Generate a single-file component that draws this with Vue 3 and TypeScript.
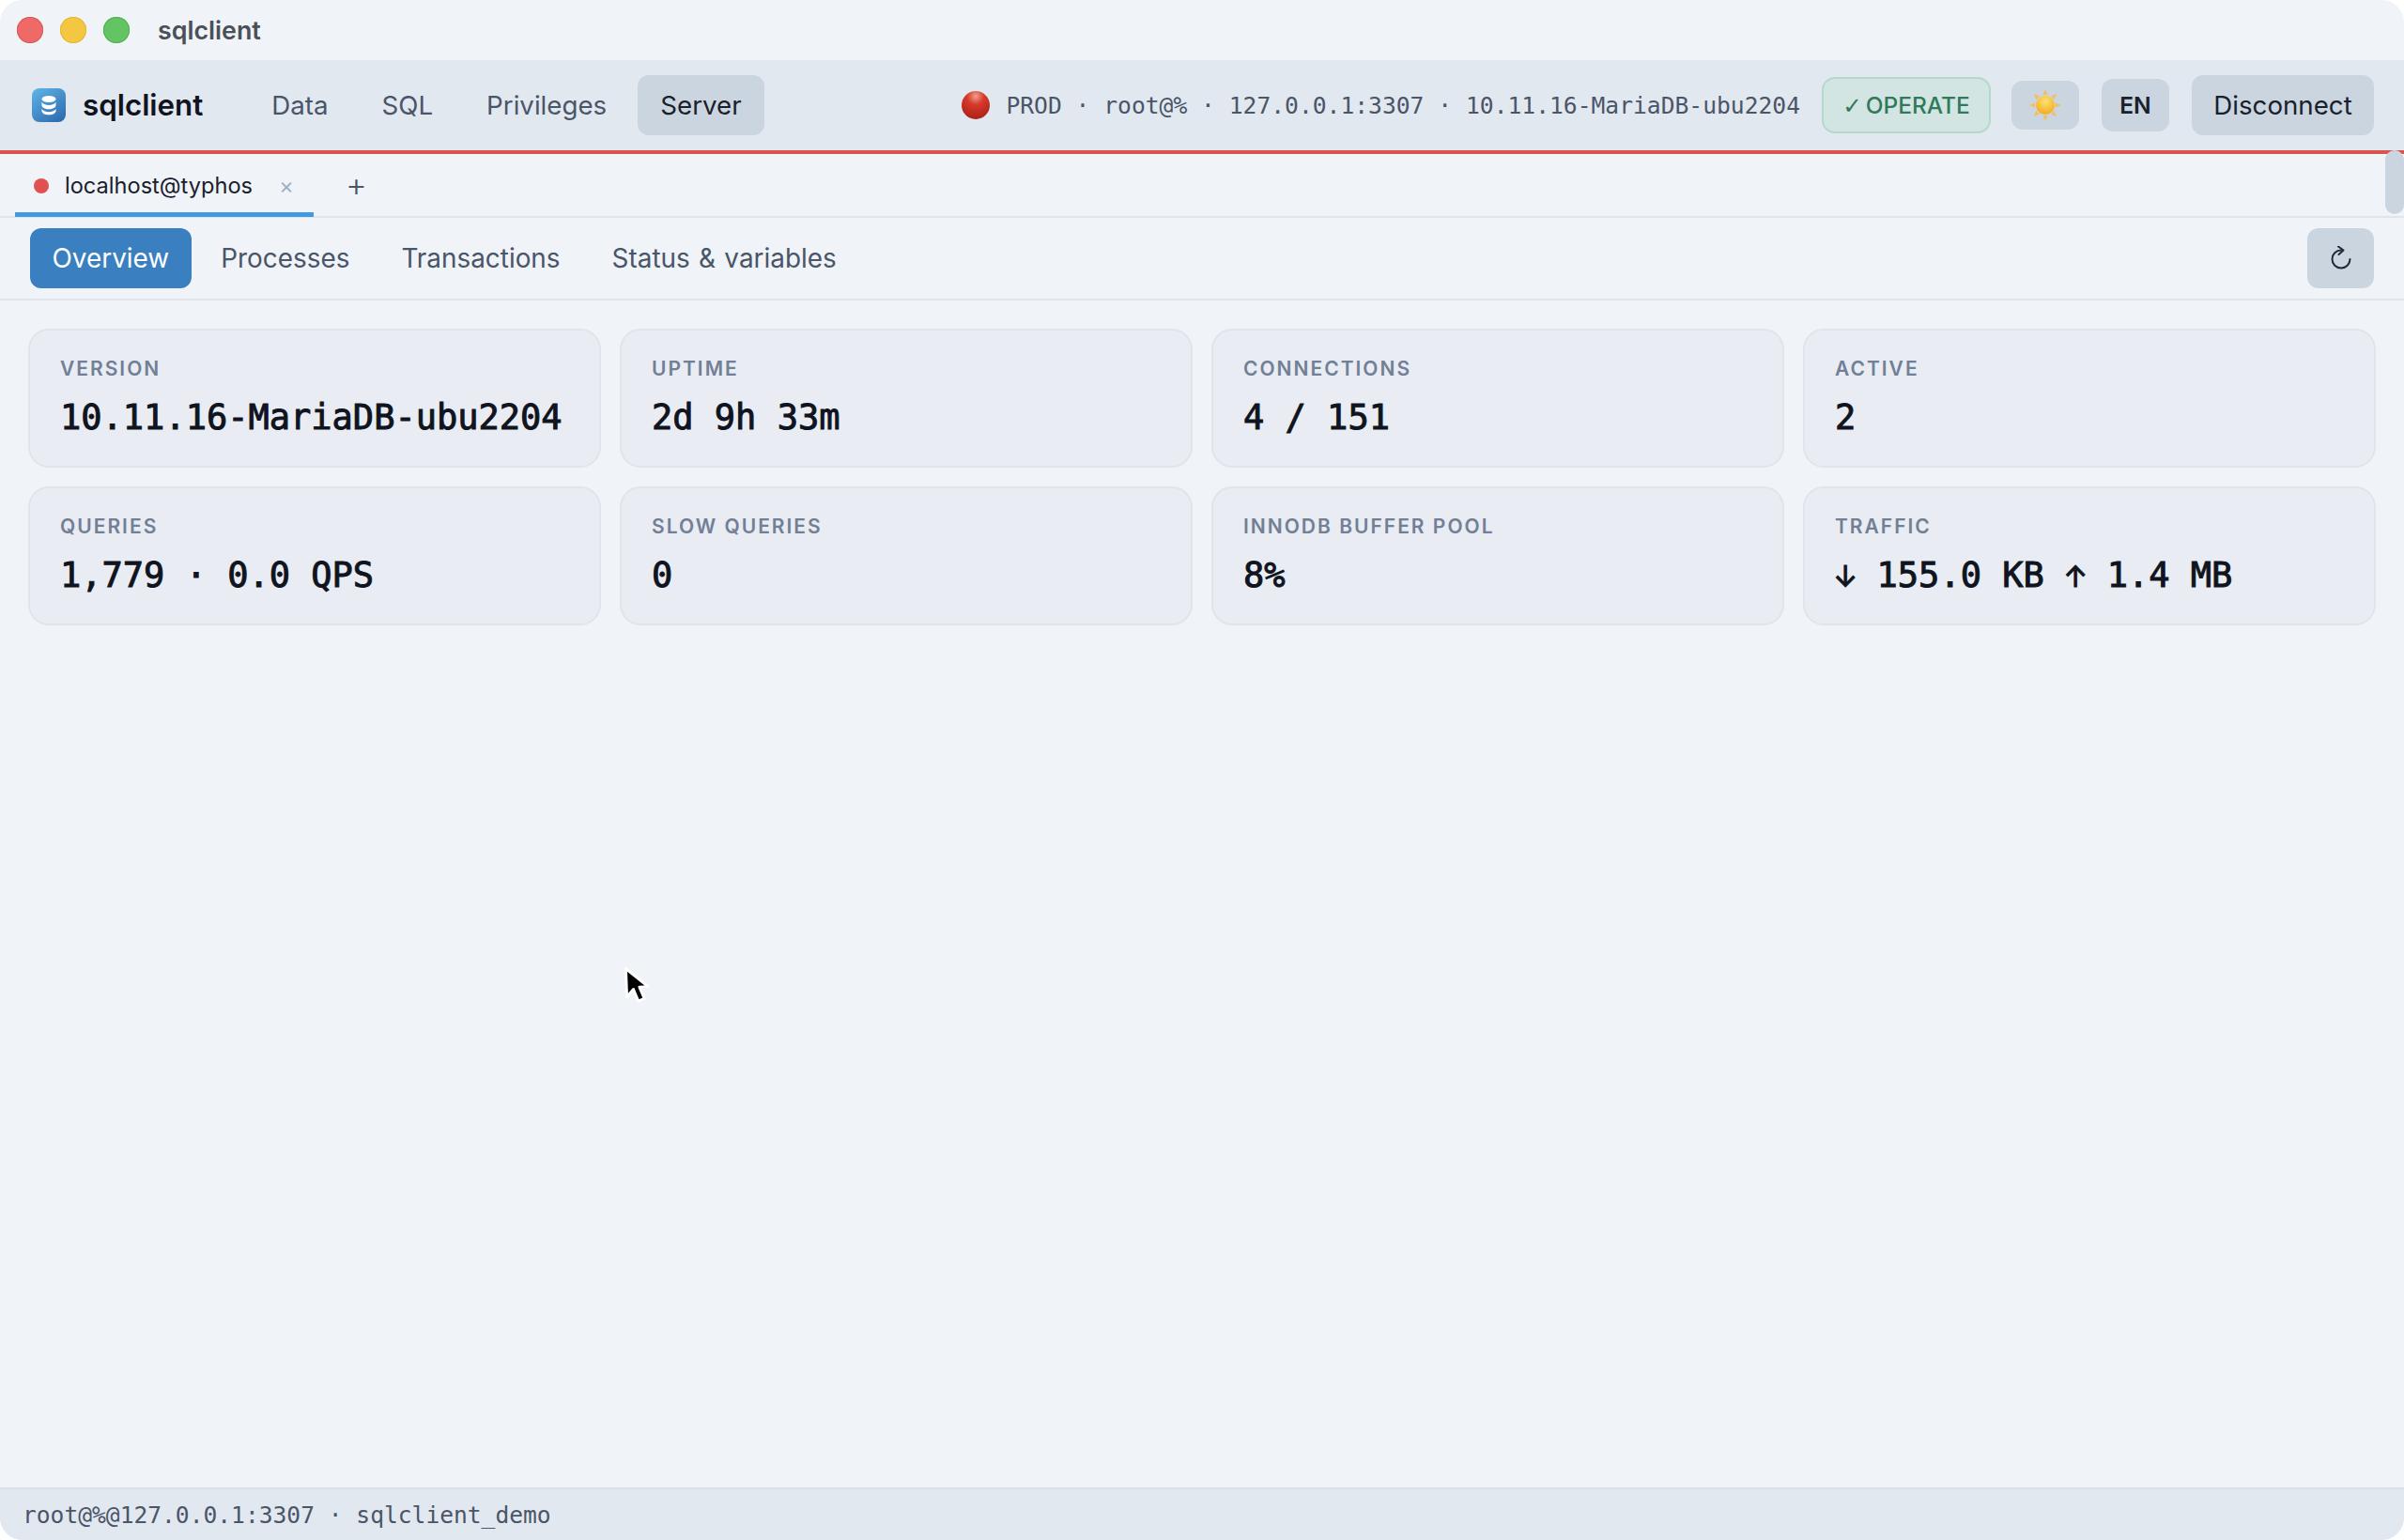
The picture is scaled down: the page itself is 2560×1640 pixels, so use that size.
<template>
  <div class="window">
    <header class="titlebar">
      <span class="light red"></span>
      <span class="light yellow"></span>
      <span class="light green"></span>
      <span class="title">sqlclient</span>
    </header>

    <div class="toolbar">
      <div class="brand">
        <span class="logo">
          <svg viewBox="0 0 36 36" width="36" height="36">
            <ellipse cx="18" cy="11.5" rx="7.5" ry="3.4" fill="#fff" />
            <path d="M10.5 14.5c1 2.3 4 3.5 7.5 3.500s6.500-1.200 7.500-3.500v3.800c0 2.200-3.400 4-7.500 4s-7.500-1.800-7.500-4z" fill="#fff" />
            <path d="M10.500 21.800c1 2.300 4 3.500 7.500 3.500s6.500-1.200 7.500-3.500v2.400c0 2.300-3.400 4.100-7.500 4.100s-7.500-1.800-7.500-4.100z" fill="#fff" />
          </svg>
        </span>
        <span class="brand-name">sqlclient</span>
      </div>
      <nav class="main-nav">
        <a v-for="item in mainNav" :key="item" class="nav-item" :class="{ active: item === 'Server' }">{{ item }}</a>
      </nav>
      <div class="conn-info">
        <svg class="prod-dot" viewBox="0 0 30 30" width="30" height="30">
          <defs>
            <radialGradient id="redBall" cx="50%" cy="18%" r="85%">
              <stop offset="0%" stop-color="#f0a090" />
              <stop offset="35%" stop-color="#d83a2c" />
              <stop offset="100%" stop-color="#a81f18" />
            </radialGradient>
          </defs>
          <circle cx="15" cy="15" r="15" fill="url(#redBall)" />
        </svg>
        <span class="conn-text">PROD · root@% · 127.0.0.1:3307 · 10.11.16-MariaDB-ubu2204</span>
      </div>
      <span class="operate"><span class="check">✓</span> OPERATE</span>
      <button class="tool-btn sun-btn">
        <svg viewBox="0 0 36 36" width="36" height="36">
          <defs>
            <radialGradient id="sunBall" cx="50%" cy="30%" r="75%">
              <stop offset="0%" stop-color="#fde36a" />
              <stop offset="100%" stop-color="#f2a51f" />
            </radialGradient>
          </defs>
          <g fill="#f3bf5a">
            <path d="M18 1l2.600 6h-5.200z" />
            <path d="M18 35l2.600-6h-5.200z" />
            <path d="M1 18l6-2.600v5.200z" />
            <path d="M35 18l-6-2.600v5.200z" />
            <path d="M6 6l6 2.400-3.600 3.600z" />
            <path d="M30 6l-6 2.400 3.600 3.600z" />
            <path d="M6 30l6-2.400-3.600-3.600z" />
            <path d="M30 30l-6-2.400 3.600-3.600z" />
          </g>
          <circle cx="18" cy="18" r="10" fill="url(#sunBall)" />
        </svg>
      </button>
      <button class="tool-btn lang-btn">EN</button>
      <button class="tool-btn disconnect-btn">Disconnect</button>
    </div>

    <div class="tabbar">
      <div class="tab">
        <span class="tab-dot"></span>
        <span class="tab-name">localhost@typhos</span>
        <span class="tab-close">×</span>
      </div>
      <span class="tab-add">+</span>
    </div>

    <div class="subnav">
      <a v-for="item in subNav" :key="item" class="sub-item" :class="{ active: item === 'Overview' }">{{ item }}</a>
      <button class="refresh-btn">
        <svg viewBox="0 0 26 26" width="26" height="26" fill="none" stroke="#1f2937" stroke-width="2" stroke-linecap="round" stroke-linejoin="round">
          <path d="M13 4.500a9.500 9.500 0 1 0 9.500 9.500" />
          <path d="M10 0.500l5.500 4-5 4.500" />
        </svg>
      </button>
    </div>

    <main class="content">
      <div class="stats">
        <div v-for="stat in stats" :key="stat.label" class="stat-card">
          <div class="stat-label">{{ stat.label }}</div>
          <div class="stat-value">
            <template v-for="(part, i) in splitArrows(stat.value)" :key="i">
              <span v-if="part === '↓' || part === '↑'" class="arrow">{{ part }}</span>
              <template v-else>{{ part }}</template>
            </template>
          </div>
        </div>
      </div>
    </main>

    <footer class="statusbar">root@%@127.0.0.1:3307 · sqlclient_demo</footer>

    <span class="scroll-thumb"></span>
    <svg class="cursor" viewBox="0 0 26 38" width="30" height="44">
      <path d="M3 3l1 26 6-7 4.500 11 5.500-2.500-4.500-10.500 8 -.5z" fill="#000" stroke="#fff" stroke-width="2.500" stroke-linejoin="round" />
    </svg>
  </div>
</template>

<script setup lang="ts">
interface Stat {
  label: string
  value: string
}

const mainNav: string[] = ['Data', 'SQL', 'Privileges', 'Server']
const subNav: string[] = ['Overview', 'Processes', 'Transactions', 'Status & variables']

const stats: Stat[] = [
  { label: 'Version', value: '10.11.16-MariaDB-ubu2204' },
  { label: 'Uptime', value: '2d 9h 33m' },
  { label: 'Connections', value: '4 / 151' },
  { label: 'Active', value: '2' },
  { label: 'Queries', value: '1,779 · 0.0 QPS' },
  { label: 'Slow queries', value: '0' },
  { label: 'InnoDB buffer pool', value: '8%' },
  { label: 'Traffic', value: '↓ 155.0 KB ↑ 1.4 MB' },
]

const splitArrows = (value: string): string[] => value.split(/([↓↑])/).filter(Boolean)
</script>

<style>
html,
body {
  margin: 0;
  background: #fff;
}
</style>

<style scoped>
.window {
  position: relative;
  height: 1640px;
  display: flex;
  flex-direction: column;
  overflow: hidden;
  border-radius: 24px;
  background: #f0f4f8;
  color: #1a202c;
  font-family: Inter, "Liberation Sans", sans-serif;
}

.titlebar {
  height: 64px;
  flex: none;
  display: flex;
  align-items: center;
  padding-left: 18px;
  gap: 18px;
}
.light {
  width: 28px;
  height: 28px;
  border-radius: 50%;
}
.light.red {
  background: #ee6a68;
  box-shadow: inset 0 0 0 1px #dc5a58;
}
.light.yellow {
  background: #f4c742;
  box-shadow: inset 0 0 0 1px #e3b53a;
}
.light.green {
  background: #62c462;
  box-shadow: inset 0 0 0 1px #52b052;
}
.title {
  margin-left: 12px;
  font-size: 26.800px;
  font-weight: 600;
  color: #4a5058;
}

.toolbar {
  height: 96px;
  flex: none;
  display: flex;
  align-items: center;
  padding: 0 32px 0 34px;
  background: #e2e8f0;
  border-bottom: 4px solid #d9534f;
}
.brand {
  display: flex;
  align-items: center;
  gap: 18px;
}
.logo {
  width: 36px;
  height: 36px;
  border-radius: 8px;
  background: linear-gradient(145deg, #5fb6ea, #2b66aa);
  display: block;
}
.logo svg {
  display: block;
}
.brand-name {
  font-size: 31.300px;
  font-weight: 600;
  color: #0f1420;
}
.main-nav {
  display: flex;
  gap: 9px;
  margin-left: 49px;
}
.nav-item {
  height: 64px;
  padding: 0 24px;
  border-radius: 12px;
  display: flex;
  align-items: center;
  font-size: 27.700px;
  color: #4a5568;
}
.nav-item.active {
  background: #cbd5e0;
  color: #1a202c;
}
.conn-info {
  margin-left: auto;
  display: flex;
  align-items: center;
  gap: 17px;
}
.prod-dot {
  display: block;
}
.conn-text {
  font-family: "DejaVu Sans Mono", "Liberation Mono", monospace;
  font-size: 24.650px;
  color: #4a5568;
}
.operate {
  margin-left: 23px;
  width: 180px;
  height: 60px;
  box-sizing: border-box;
  display: flex;
  align-items: center;
  justify-content: center;
  gap: 4px;
  border: 2px solid #b4d8cb;
  border-radius: 14px;
  background: #d3e5e2;
  color: #2f7a5b;
  font-size: 24.500px;
  font-weight: 500;
}
.check {
  font-family: "DejaVu Sans", sans-serif;
}
.tool-btn {
  border: none;
  background: #cbd5e0;
  color: #1a202c;
  font-family: inherit;
  padding: 0;
  display: flex;
  align-items: center;
  justify-content: center;
}
.sun-btn {
  margin-left: 22px;
  width: 72px;
  height: 52px;
  border-radius: 12px;
}
.lang-btn {
  margin-left: 24px;
  width: 72px;
  height: 56px;
  border-radius: 12px;
  font-size: 24.500px;
  font-weight: 600;
}
.disconnect-btn {
  margin-left: 24px;
  width: 194px;
  height: 64px;
  border-radius: 12px;
  font-size: 27.700px;
}

.tabbar {
  height: 66px;
  flex: none;
  box-sizing: content-box;
  display: flex;
  align-items: stretch;
  padding-left: 16px;
  border-bottom: 2px solid #dfe5ea;
}
.tab {
  width: 318px;
  box-sizing: border-box;
  display: flex;
  align-items: center;
  padding: 5px 0 0 20px;
  border-bottom: 5px solid #4299e1;
  margin-bottom: -1px;
}
.tab-dot {
  width: 16px;
  height: 16px;
  border-radius: 50%;
  background: #e05252;
}
.tab-name {
  margin-left: 17px;
  font-size: 23.600px;
}
.tab-close {
  margin-left: 28px;
  font-size: 24px;
  color: #a0aec0;
}
.tab-add {
  margin: -2px 0 0 34px;
  align-self: center;
  font-size: 35px;
  font-weight: 300;
  color: #4a5568;
}

.subnav {
  flex: none;
  display: flex;
  align-items: center;
  gap: 8px;
  padding: 11px 32px;
  height: 64px;
  box-sizing: content-box;
  border-bottom: 2px solid #dfe5ea;
}
.sub-item {
  height: 64px;
  padding: 0 23.500px;
  border-radius: 12px;
  display: flex;
  align-items: center;
  font-size: 27.900px;
  word-spacing: 1.500px;
  color: #4a5568;
}
.sub-item.active {
  background: #3a7fc0;
  color: #fff;
}
.refresh-btn {
  margin-left: auto;
  width: 71px;
  height: 64px;
  padding: 0;
  border: none;
  border-radius: 12px;
  background: #cbd5e0;
  display: flex;
  align-items: center;
  justify-content: center;
}

.content {
  flex: 1;
  padding: 30px;
}
.stats {
  display: grid;
  grid-template-columns: repeat(4, 1fr);
  gap: 20px;
}
.stat-card {
  height: 148px;
  box-sizing: border-box;
  padding: 28px 32px 0;
  border: 2px solid #dfe5ea;
  border-radius: 22px;
  background: #e9edf3;
}
.stat-label {
  font-size: 21px;
  font-weight: 600;
  line-height: 26px;
  letter-spacing: 2px;
  text-transform: uppercase;
  color: #718096;
}
.stat-value {
  margin-top: 16px;
  font-family: "DejaVu Sans Mono", "Liberation Mono", monospace;
  font-size: 37px;
  line-height: 46px;
  -webkit-text-stroke: 1px #0f1420;
  color: #0f1420;
}
.arrow {
  display: inline-flex;
  justify-content: center;
  width: 22.300px;
  font-family: Inter, sans-serif;
  font-size: 31px;
}

.statusbar {
  height: 54px;
  flex: none;
  display: flex;
  align-items: center;
  padding-left: 24px;
  background: #e2e8f0;
  border-top: 2px solid #d8dfe7;
  font-family: "DejaVu Sans Mono", "Liberation Mono", monospace;
  font-size: 24.600px;
  color: #4a5568;
}

.scroll-thumb {
  position: absolute;
  top: 160px;
  right: 0;
  width: 20px;
  height: 68px;
  border-radius: 10px;
  background: #cbd5e0;
}
.cursor {
  position: absolute;
  left: 663px;
  top: 1028px;
}
</style>
